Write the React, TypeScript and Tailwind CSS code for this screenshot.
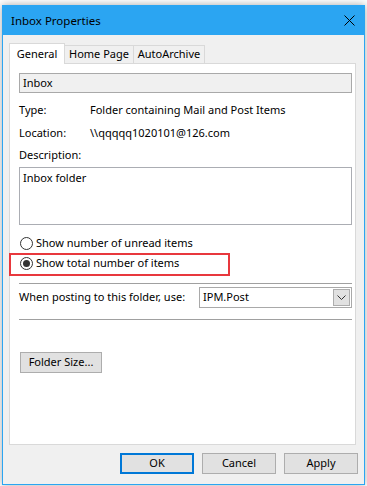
const font = { fontFamily: '"Noto Sans", "Liberation Sans", sans-serif' };

const Btn = ({ label, primary, className = '' }: { label: string; primary?: boolean; className?: string }) => (
  <div
    className={
      'h-[21px] flex items-center justify-center bg-[#e1e1e1] text-[11px] text-black ' +
      (primary ? 'border-2 border-[#0078d7] ' : 'border border-[#adadad] ') +
      className
    }
  >
    {label}
  </div>
);

const Radio = ({ checked, label }: { checked?: boolean; label: string }) => (
  <div className="h-[20px] flex items-center">
    <div className="ml-[1px] w-[13px] h-[13px] rounded-full border border-[#333] bg-white flex items-center justify-center">
      {checked && <div className="w-[7px] h-[7px] rounded-full bg-[#333]" />}
    </div>
    <span className="ml-[3px] text-[11px] text-black">{label}</span>
  </div>
);

export default function App() {
  return (
    <div className="w-[367px] h-[486px] bg-white overflow-hidden pt-[5px] pl-[2px]" style={font}>
      <div className="w-[363px] h-[480px] border border-[#2ba5f2] bg-[#f0f0f0] shadow-[0_0_8px_rgba(0,0,0,0.35)] flex flex-col">
        {/* title bar */}
        <div className="h-[29px] bg-[#2ba5f2] flex items-center justify-between pl-[8px] pr-[8px]">
          <span className="text-[11.5px] text-black">Inbox Properties</span>
          <svg width="11" height="11" viewBox="0 0 11 11" className="mr-[1px]">
            <path d="M0.5 0.5 L10.5 10.5 M10.5 0.5 L0.5 10.5" stroke="#000" strokeWidth="1" />
          </svg>
        </div>

        {/* tabs */}
        <div className="mt-[8px] ml-[6px] flex items-end h-[20px] relative z-10">
          <div className="w-[56px] h-[21px] -mb-[1px] bg-white border border-b-0 border-[#d9d9d9] flex items-center justify-center text-[11px] text-black">
            General
          </div>
          <div className="w-[69px] h-[18px] bg-[#f0f0f0] border border-l-0 border-b-0 border-[#d9d9d9] flex items-center justify-center text-[11px] text-black">
            Home Page
          </div>
          <div className="w-[71px] h-[18px] bg-[#f0f0f0] border border-l-0 border-b-0 border-[#d9d9d9] flex items-center justify-center text-[11px] text-black">
            AutoArchive
          </div>
        </div>

        {/* panel */}
        <div className="ml-[6px] w-[347px] h-[382px] bg-white border border-[#d9d9d9] pt-[9px] pl-[9px] pr-[3px] relative">
          <div className="h-[20px] bg-[#f0f0f0] border border-[#a9a9a9] flex items-center pl-[3px] text-[11px] text-black">
            Inbox
          </div>
          <div className="mt-[6px] h-[23px] flex items-center text-[11px] text-black">
            <span className="w-[71px]">Type:</span>
            <span>Folder containing Mail and Post Items</span>
          </div>
          <div className="h-[23px] flex items-center text-[11px] text-black">
            <span className="w-[71px]">Location:</span>
            <span>\\qqqqq1020101@126.com</span>
          </div>
          <div className="h-[21px] flex items-center text-[11px] text-black">Description:</div>
          <div className="mt-[1px] h-[58px] border border-[#abadb3] pl-[3px] pt-[2px] text-[11px] text-black">
            Inbox folder
          </div>

          <div className="mt-[8px]">
            <Radio label="Show number of unread items" />
            <Radio checked label="Show total number of items" />
          </div>

          <div className="mt-[10px] border-t border-[#a0a0a0]" />

          <div className="mt-[3px] flex items-center justify-between">
            <span className="whitespace-nowrap text-[11px] text-black">When posting to this folder, use:</span>
            <div className="shrink-0 w-[153px] h-[21px] border border-[#a9a9a9] bg-white flex items-center justify-between pl-[3px] pr-[1px]">
              <span className="text-[11px] text-black">IPM.Post</span>
              <div className="w-[17px] h-[17px] bg-[#e1e1e1] border border-[#adadad] flex items-center justify-center">
                <svg width="9" height="5" viewBox="0 0 9 5">
                  <path d="M0.5 0.5 L4.5 4.5 L8.5 0.5" stroke="#333" strokeWidth="1" fill="none" />
                </svg>
              </div>
            </div>
          </div>

          <div className="mt-[11px] border-t border-[#a0a0a0]" />

          <Btn label="Folder Size..." className="mt-[32px] ml-[1px] w-[82px]" />

          {/* red annotation box */}
          <div className="absolute left-[-1px] top-[189px] w-[221px] h-[23px] border-2 border-[#e8383d]" />
        </div>

        {/* footer buttons */}
        <div className="mt-[8px] flex justify-end gap-[8px] pr-[6px]">
          <Btn label="OK" primary className="w-[74px]" />
          <Btn label="Cancel" className="w-[74px]" />
          <Btn label="Apply" className="w-[74px]" />
        </div>
      </div>
    </div>
  );
}
